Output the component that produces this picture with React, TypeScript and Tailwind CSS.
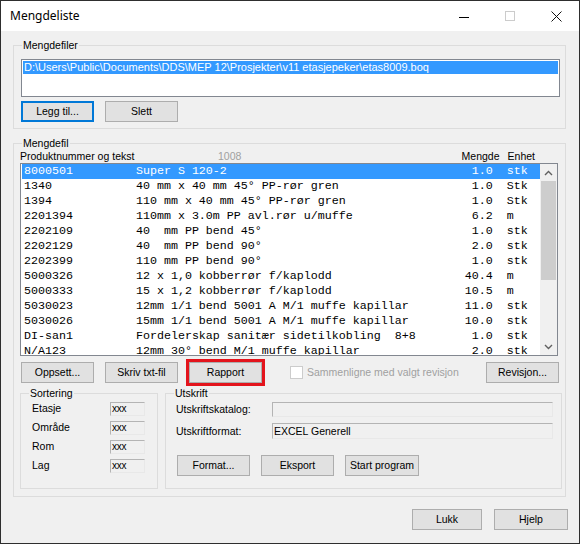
import React from 'react';

const rows: [string, string, string, string][] = [
    ['8000501', 'Super S 120-2', '1.0', 'stk'],
    ['1340', '40 mm x 40 mm 45° PP-rør gren', '1.0', 'Stk'],
    ['1394', '110 mm x 40 mm 45° PP-rør gren', '1.0', 'Stk'],
    ['2201394', '110mm x 3.0m PP avl.rør u/muffe', '6.2', 'm'],
    ['2202109', '40  mm PP bend 45°', '1.0', 'stk'],
    ['2202129', '40  mm PP bend 90°', '2.0', 'stk'],
    ['2202399', '110 mm PP bend 90°', '1.0', 'stk'],
    ['5000326', '12 x 1,0 kobberrør f/kaplodd', '40.4', 'm'],
    ['5000333', '15 x 1,2 kobberrør f/kaplodd', '10.5', 'm'],
    ['5030023', '12mm 1/1 bend 5001 A M/1 muffe kapillar', '11.0', 'stk'],
    ['5030026', '15mm 1/1 bend 5001 A M/1 muffe kapillar', '10.0', 'stk'],
    ['DI-san1', 'Fordelerskap sanitær sidetilkobling  8+8', '1.0', 'stk'],
    ['N/A123', '12mm 30° bend M/1 muffe kapillar', '2.0', 'stk'],
];

// fixed-width line, the way the old listbox formats it
const formatRow = ([code, text, qty, unit]: [string, string, string, string]) =>
    code.padEnd(16) + text.padEnd(67 - 16 - qty.length) + qty + '  ' + unit;

function Btn({ children, className = '', primary = false }: { children: React.ReactNode; className?: string; primary?: boolean }) {
    return (
        <div
            className={`h-[21px] shrink-0 flex items-center justify-center bg-[#e1e1e1] leading-none ${
                primary ? 'border-2 border-[#0078d7]' : 'border border-[#adadad]'
            } ${className}`}
        >
            {children}
        </div>
    );
}

function Group({ label, className = '', children }: { label: string; className?: string; children: React.ReactNode }) {
    return (
        <div className={`relative shrink-0 border border-[#dcdcdc] ${className}`}>
            <span className="absolute -top-[7px] left-[8px] bg-[#f0f0f0] px-[1px] leading-[13px]">{label}</span>
            {children}
        </div>
    );
}

function Field({ children, className = '' }: { children?: React.ReactNode; className?: string }) {
    return (
        <div
            className={`shrink-0 bg-[#f0f0f0] border border-t-[#b4b4b4] border-l-[#b4b4b4] border-b-[#e8e8e8] border-r-[#e8e8e8] flex items-center leading-none ${className}`}
        >
            {children}
        </div>
    );
}

function Chevron({ up }: { up?: boolean }) {
    return (
        <svg width="9" height="6" viewBox="0 0 9 6">
            <path d={up ? 'M1 5 L4.5 1.5 L8 5' : 'M1 1 L4.5 4.5 L8 1'} fill="none" stroke="#606060" strokeWidth="1.4" />
        </svg>
    );
}

export default function App() {
    return (
        <div className="w-[580px] h-[544px] border border-[#2e2e2e] bg-[#f0f0f0] flex flex-col font-['Liberation_Sans',Arial,sans-serif] text-[10.5px] text-black overflow-hidden">
            {/* Title bar */}
            <div className="h-[30px] shrink-0 bg-white flex items-center">
                <span className="pl-[9px] text-[12px] font-['Noto_Sans',sans-serif]">Mengdeliste</span>
                <div className="ml-auto flex h-full">
                    <div className="w-[46px] h-full flex items-center justify-center">
                        <div className="w-[10px] h-px bg-black mt-[2px]" />
                    </div>
                    <div className="w-[46px] h-full flex items-center justify-center">
                        <div className="w-[10px] h-[10px] border border-[#cccccc]" />
                    </div>
                    <div className="w-[46px] h-full flex items-center justify-center">
                        <svg width="11" height="11" viewBox="0 0 11 11">
                            <path d="M0.5 0.5 L10.5 10.5 M10.5 0.5 L0.5 10.5" stroke="#111" strokeWidth="1" />
                        </svg>
                    </div>
                </div>
            </div>

            <div className="flex-1 flex flex-col px-[12px]">
                {/* Mengdefiler */}
                <Group label="Mengdefiler" className="mt-[14px] w-[553px] h-[84px]">
                    <div className="ml-[7px] mt-[13px] w-[539px] h-[38px] bg-white border border-[#828790] p-px">
                        <div className="h-[13px] bg-[#3399ff] text-white text-[11px] leading-[13px] pl-[1px] whitespace-nowrap">
                            D:\Users\Public\Documents\DDS\MEP 12\Prosjekter\v11 etasjepeker\etas8009.boq
                        </div>
                    </div>
                    <div className="flex gap-[11px] ml-[7px] mt-[4px]">
                        <Btn primary className="w-[73px]">Legg til...</Btn>
                        <Btn className="w-[73px]">Slett</Btn>
                    </div>
                </Group>

                {/* Mengdefil */}
                <Group label="Mengdefil" className="mt-[14px] w-[553px] h-[354px]">
                    <div className="flex items-center h-[13px] mt-[6px] ml-[6px] w-[538px] leading-[13px]">
                        <span className="w-[198px]">Produktnummer og tekst</span>
                        <span className="text-[#a0a0a0]">1008</span>
                        <span className="ml-auto">Mengde</span>
                        <span className="ml-[8px] mr-[23px]">Enhet</span>
                    </div>
                    <div className="ml-[6px] w-[538px] h-[193px] bg-white border border-[#828790] flex overflow-hidden">
                        <div className="flex-1 pl-px font-['Liberation_Mono','Courier_New',monospace] text-[11.67px] leading-[15px] whitespace-pre">
                            {rows.map((r, i) => (
                                <div key={r[0]} className={`h-[15px] pl-[2px] ${i === 0 ? 'bg-[#3399ff] text-white' : ''}`}>
                                    {formatRow(r)}
                                </div>
                            ))}
                        </div>
                        <div className="w-[17px] shrink-0 bg-[#f0f0f0] flex flex-col">
                            <div className="h-[17px] flex items-center justify-center"><Chevron up /></div>
                            <div className="h-[99px] mx-[1px] bg-[#cdcdcd]" />
                            <div className="flex-1" />
                            <div className="h-[17px] flex items-center justify-center"><Chevron /></div>
                        </div>
                    </div>

                    {/* button row */}
                    <div className="flex items-center mt-[6px] ml-[7px] mr-[6px]">
                        <Btn className="w-[73px]">Oppsett...</Btn>
                        <Btn className="w-[73px] ml-[11px]">Skriv txt-fil</Btn>
                        <Btn className="w-[73px] ml-[11px] outline-3 outline-[#e3141c]">Rapport</Btn>
                        <div className="ml-[28px] w-[13px] h-[13px] bg-white border border-[#cccccc]" />
                        <span className="ml-[4px] text-[#a0a0a0]">Sammenligne med valgt revisjon</span>
                        <Btn className="w-[73px] ml-auto">Revisjon...</Btn>
                    </div>

                    <div className="flex mt-[10px] ml-[6px]">
                        <Group label="Sortering" className="w-[138px] h-[96px]">
                            <div className="flex flex-col gap-[5px] pt-[8px] pl-[11px]">
                                {['Etasje', 'Område', 'Rom', 'Lag'].map((l) => (
                                    <div key={l} className="flex items-center h-[14px]">
                                        <span className="w-[78px]">{l}</span>
                                        <Field className="w-[35px] h-[14px] pl-[1px] text-[10px] tracking-[-0.3px]">xxx</Field>
                                    </div>
                                ))}
                            </div>
                        </Group>
                        <Group label="Utskrift" className="ml-[7px] w-[397px] h-[96px]">
                            <div className="pt-[8px] pl-[10px]">
                                <div className="flex items-center h-[15px]">
                                    <span className="w-[96px]">Utskriftskatalog:</span>
                                    <Field className="w-[281px] h-[15px]" />
                                </div>
                                <div className="flex items-center h-[16px] mt-[6px]">
                                    <span className="w-[96px] mt-[2px]">Utskriftformat:</span>
                                    <Field className="w-[281px] h-[16px] pl-[1px]">EXCEL Generell</Field>
                                </div>
                                <div className="flex gap-[11px] mt-[16px] ml-[1px]">
                                    <Btn className="w-[73px]">Format...</Btn>
                                    <Btn className="w-[73px]">Eksport</Btn>
                                    <Btn className="w-[74px]">Start program</Btn>
                                </div>
                            </div>
                        </Group>
                    </div>
                </Group>

                {/* bottom buttons */}
                <div className="flex justify-end gap-[12px] mt-[12px] mr-[-1px]">
                    <Btn className="w-[70px]">Lukk</Btn>
                    <Btn className="w-[74px]">Hjelp</Btn>
                </div>
            </div>
        </div>
    );
}
